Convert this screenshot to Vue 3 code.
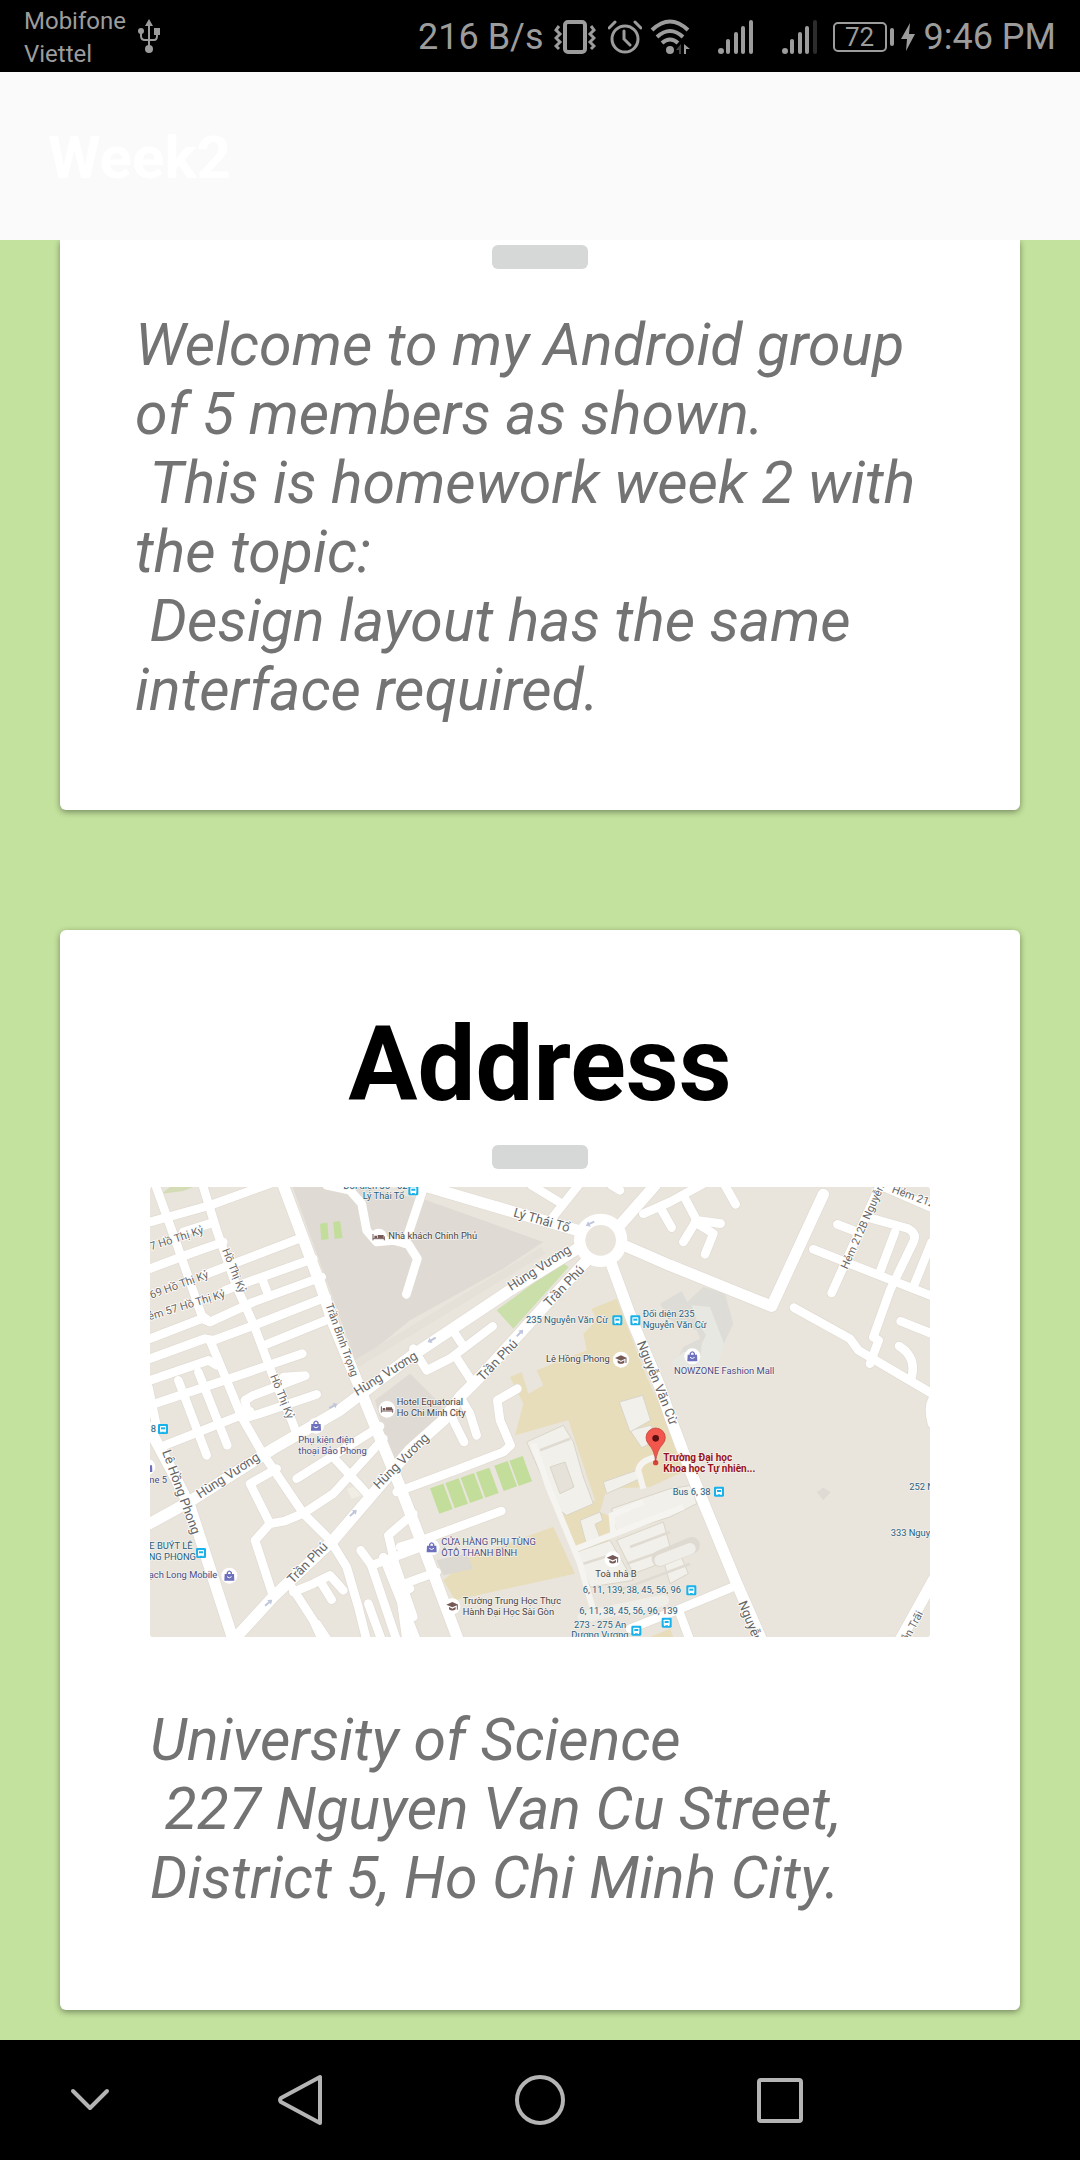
<script setup>
const intro =
  'Welcome to my Android group of 5 members as shown.\n This is homework week 2 with the topic:\n Design layout has the same interface required.'
const address =
  'University of Science\n 227 Nguyen Van Cu Street, District 5, Ho Chi Minh City.'

const lanes = [
  // Hồ Thị Kỷ blocks
  'M160 0L200 130L260 300L310 410L370 570L425 700L440 740',
  'M15 -10L80 170L155 385L180 405',
  'M0 105L180 55L360 -10',
  'M0 245L120 200L220 165',
  'M100 135L185 108',
  'M160 265L460 150',
  'M225 310L490 215',
  'M340 285L355 325',
  'M0 455L155 395L180 405L310 345L515 270',
  'M0 515L165 455L190 460L320 412L530 330',
  'M350 472L545 393',
  'M0 580L175 520L200 535',
  'M0 655L230 578L457 500',
  'M400 570L466 566M285 640L310 625L466 566',
  'M285 640L295 690L330 680L500 622',
  'M182 465L230 580L275 690L335 795L460 979L540 1059L590 1140L625 1260L650 1360',
  'M85 580L170 805', 'M145 555L232 775',
  'M45 775L260 690L300 672',
  'M-5 600L20 720',
  // south-west
  'M440 875L690 718', 'M460 979L550 920L700 755', 'M545 805L660 930',
  'M380 845L300 890L360 1010L405 1002L460 979',
  'M360 1010L315 1060L370 1229',
  'M430 1215L490 1190L540 1165L580 1210', 'M512 1185L545 1238',
  'M425 1200L490 1300L515 1355M500 1310L530 1355', 'M655 1250L695 1360',
  'M632 1090L665 1135L800 1085', 'M662 1129L740 1360',
  'M790 980L715 1045L735 1130L790 1290', 'M780 1205L750 1215L770 1360',
  'M750 1080L820 1058L1054 972', 'M750 1195L860 1155', 'M700 1110L800 1360',
  'M1102 605L1042 640L1050 700L1082 775L1060 795L930 845L740 915',
  'M880 680L905 690L942 765', 'M930 630L960 680L980 745',
  // centre
  'M790 485L830 550L900 515L1028 418', 'M905 425L935 470', 'M915 505L970 590',
  'M530 -5L600 10L635 50L650 130L680 165L730 160L775 172L802 215L769 322',
  'M825 -10L765 170',
  // north-east
  'M1205 95L1285 -5', 'M1145 -5L1235 50', 'M1385 -5L1410 10',
  'M1480 80L1560 45L1660 -10', 'M1530 60L1565 122',
  'M1600 25L1640 100L1712 110', 'M1640 100L1600 165', 'M1635 105L1690 140L1665 202',
  'M1725 -5L1757 52',
  'M1990 187L2340 325', 'M2062 112L2130 138', 'M2045 318L2190 -5L2340 60',
  'M2150 90L2275 125Q2302 140 2290 165L2220 310L2170 450L2186 460L2160 530',
  'M2235 135L2190 255', 'M2345 165L2290 300',
  'M1932 362L2100 455L2125 490L2350 622', 'M2252 403L2345 440',
  'M2247 477Q2300 510 2285 570', 'M2346 640Q2334 665 2346 710',
  'M1440 1325L1580 1270L1750 1199', 'M1590 1280L1620 1360',
]
const avenues = [
  'M400 -5L510 290L550 410L620 580L660 680L750 899L820 1080L925 1360',
  'M-5 720L70 860L120 959L250 1360',
  'M-5 1012L110 949L370 785L570 669L780 510L930 410L1080 310L1290 180',
  'M250 1360L370 1229L550 1059L670 919L780 789L880 700L930 630L990 570L1100 450L1190 350L1320 210',
  'M800 -10L1090 75L1300 135',
  'M1380 220L1450 410L1530 600L1560 689L1620 849L1760 1189L1835 1360',
  'M1410 170L1560 235L1865 358L2020 22',
  'M1405 120L1515 -5',
  'M2350 1180L2250 1360',
]
const streetNames = [
  [4, 190, -18, '7 Hồ Thị Kỷ', 1], [4, 335, -20, '69 Hồ Thị Kỷ', 1], [-2, 400, -17, 'ẻm 57 Hồ Thị Kỷ', 1],
  [216, 190, 68, 'Hồ Thị Kỷ', 1], [360, 568, 68, 'Hồ Thị Kỷ', 1], [526, 354, 70, 'Trần Bình Trọng', 1],
  [622, 628, -32, 'Hùng Vương'], [150, 935, -33, 'Hùng Vương'], [686, 908, -45, 'Hùng Vương'], [1084, 312, -33, 'Hùng Vương'],
  [428, 1192, -46, 'Trần Phú'], [998, 584, -46, 'Trần Phú'], [1198, 362, -46, 'Trần Phú'],
  [1088, 88, 16, 'Lý Thái Tổ'], [36, 794, 70, 'Lê Hồng Phong'],
  [1460, 468, 68, 'Nguyễn Văn Cừ'], [1764, 1248, 68, 'Nguyễn'],
  [2092, 248, -66, 'Hẻm 212B Nguyễn', 1], [2224, 16, 20, 'Hẻm 212', 1], [2274, 1366, -62, 'ễn Trãi', 1],
]
const places = [
  [580, 6, 'Đối diện 35 - 62', 'transit'], [638, 35, 'Lý Thái Tổ', 'transit'],
  [715, 156, 'Nhà khách Chính Phủ'], [1128, 408, '235 Nguyễn Văn Cừ', 'transit'],
  [1478, 390, 'Đối diện 235', 'transit'], [1478, 424, 'Nguyễn Văn Cừ', 'transit'],
  [1188, 525, 'Lê Hồng Phong'], [1572, 560, 'NOWZONE Fashion Mall', 'shop'],
  [740, 655, 'Hotel Equatorial'], [740, 688, 'Ho Chi Minh City'],
  [445, 768, 'Phụ kiện điện', 'shop'], [445, 801, 'thoại Bảo Phong', 'shop'],
  [2, 734, '8', 'transit'], [-2, 888, 'ne 5', 'shop'],
  [-2, 1087, 'E BUÝT LÊ', 'transit'], [-4, 1120, 'NG PHONG', 'transit'], [-4, 1174, 'ạch Long Mobile', 'shop'],
  [874, 1074, 'CỬA HÀNG PHỤ TÙNG', 'shop'], [874, 1107, 'ÔTÔ THANH BÌNH', 'shop'],
  [938, 1250, 'Trường Trung Học Thực'], [938, 1283, 'Hành Đại Học Sài Gòn'],
  [1336, 1169, 'Toà nhà B'], [1298, 1218, '6, 11, 139, 38, 45, 56, 96', 'transit'],
  [1288, 1280, '6, 11, 38, 45, 56, 96, 139', 'transit'],
  [1272, 1322, '273 - 275 An', 'transit'], [1264, 1354, 'Dương Vương', 'transit'],
  [1568, 923, 'Bus 6, 38', 'transit'], [2278, 909, '252 N', 'transit'], [2222, 1046, '333 Nguy', 'transit'],
]
const busStops = [[790, 10], [1402, 400], [1456, 400], [1707, 914], [39, 726], [153, 1098], [1624, 1210], [1459, 1331], [1550, 1307]]
const shops = [[1627, 508], [498, 716], [238, 1166], [845, 1081], [-8, 840]]
const schools = [[1413, 518], [1388, 1117], [907, 1258]]
const hotels = [[686, 150], [711, 667]]
const courts = [0, 46, 92, 138, 193, 238]
const arrows = [[550, 657, -28], [845, 459, 150], [1110, 438, -46], [610, 978, -42], [356, 1247, -40], [1320, 110, 155]]
</script>

<template>
  <div class="screen">
    <header class="status">
      <div class="carrier">
        <div class="operators"><span>Mobifone</span><span>Viettel</span></div>
        <svg width="24" height="36" viewBox="0 0 24 36" fill="none" stroke="#9c9c9c" stroke-width="2">
          <path d="M12 5V31M4 13V18Q4 22 8 22H17Q20 22 20 18V13" />
          <g fill="#9c9c9c" stroke="none"><path d="M12 1L16 8H8ZM17 10H23V17H17Z" /><circle cx="4" cy="13" r="3" /><circle cx="12" cy="31" r="4" /></g>
        </svg>
      </div>
      <div class="indicators">
        <span>216 B/s</span>
        <svg class="vibrate" width="42" height="34" viewBox="0 0 42 34" fill="none" stroke="#9c9c9c">
          <rect x="11" y="2" width="20" height="30" rx="3" stroke-width="4" />
          <path d="M5 6L2 10L6 14L2 18L6 22L2 26L5 29M37 6L40 10L36 14L40 18L36 22L40 26L37 29" stroke-width="3" />
        </svg>
        <svg class="alarm" width="34" height="36" viewBox="0 0 34 36" fill="none" stroke="#9c9c9c" stroke-width="3">
          <circle cx="17" cy="20" r="13" /><path d="M16 12V20L22 26M1 9L7 3M33 9L27 3" stroke-linecap="round" />
        </svg>
        <svg class="wifi" width="40" height="36" viewBox="0 0 40 36" fill="none" stroke="#9c9c9c" stroke-width="4">
          <path d="M2 11Q20 -6 38 11M7 18Q20 6 33 18M12 24Q20 17 28 24" /><circle cx="20" cy="31" r="4" fill="#9c9c9c" stroke="none" />
          <path d="M34 25L40 30H36V35H34Z" fill="#9c9c9c" stroke="none" /><path d="M31 25V35H29V31H26Z" fill="#444" stroke="none" />
        </svg>
        <svg class="signal" width="36" height="34" viewBox="0 0 36 34" fill="#9c9c9c">
          <circle cx="3" cy="31" r="3" /><rect x="8" y="19" width="4" height="15" rx="2" /><rect x="16" y="12" width="4" height="22" rx="2" /><rect x="23" y="6" width="4" height="28" rx="2" /><rect x="31" y="0" width="4" height="34" rx="2" />
        </svg>
        <svg class="signal" width="36" height="34" viewBox="0 0 36 34" fill="#9c9c9c">
          <circle cx="3" cy="31" r="3" /><rect x="8" y="19" width="4" height="15" rx="2" /><rect x="16" y="12" width="4" height="22" rx="2" /><rect x="23" y="6" width="4" height="28" rx="2" /><rect x="31" y="0" width="4" height="34" rx="2" fill="#2c2c2c" />
        </svg>
        <span class="battery">72</span>
        <svg class="bolt" width="14" height="28" viewBox="0 0 14 28"><path d="M9 0L0 16H6L5 28L14 11H8Z" fill="#9c9c9c" /></svg>
        <span>9:46 PM</span>
      </div>
    </header>

    <div class="appbar"><h1>Week2</h1></div>

    <main>
      <section class="card first">
        <button class="tab" type="button" aria-label="Introduction"></button>
        <p>{{ intro }}</p>
      </section>

      <section class="card second">
        <h2>Address</h2>
        <button class="tab" type="button" aria-label="Show address"></button>
        <svg class="map" viewBox="0 0 2340 1350" role="img" aria-label="Map">
          <defs>
            <g id="bus"><rect x="-15" y="-15" width="30" height="30" rx="4" fill="#18b1ea" /><rect x="-9" y="-9" width="18" height="17" rx="2" fill="#fff" /><path d="M-6 -5H6V1H-6Z" fill="#18b1ea" /><path d="M-8 7H-4V10H-8ZM4 7H8V10H4Z" fill="#fff" /></g>
            <g id="shop"><circle r="24" fill="#fff" /><path d="M-14 -5H14L15 15H-15Z" fill="#6c70bd" /><path d="M-6 -4V-9Q0 -18 6 -9V-4" fill="none" stroke="#6c70bd" stroke-width="4" /><path d="M-7 3Q0 10 7 3" fill="none" stroke="#fff" stroke-width="3" /></g>
            <g id="school"><circle r="24" fill="#fff" /><path d="M-18 -5L0 -13L18 -5L0 3Z" fill="#755a58" /><path d="M-10 2V9Q0 16 10 9V2L0 7Z" fill="#755a58" /><path d="M15 -4V10" stroke="#755a58" stroke-width="3" /></g>
            <g id="hotel"><circle r="25" fill="#fff" /><path d="M-17 -9V10M-17 5H17M17 10V-2" stroke="#755a58" stroke-width="3" fill="none" /><path d="M-13 -4H-5V3H-13ZM-3 -6H15V3H-3Z" fill="#755a58" /></g>
          </defs>
          <rect width="2340" height="1350" fill="#e9e5dc" />

          <path d="M428 0H640L830 40L1180 165L1060 245L780 400L620 530Z" fill="#dfdad4" />
          <path d="M675 640L780 560L860 640L900 700L735 860Z" fill="#dfdad4" />
          <path d="M620 530L1180 190" stroke="#e6e1d8" stroke-width="24" />
          <path d="M1325 365L1400 335L1490 570L1570 740L1610 850L1500 900L1370 905L1350 975L1410 1000L1370 1065L1280 1085L1235 980L1335 940L1255 700L1095 745L1120 650L1080 570L1115 555L1135 620L1180 595L1160 550L1310 490L1300 440L1340 400Z" fill="#e8ddba" />
          <path d="M960 1110L1210 1019L1275 1160L915 1240L880 1180Z" fill="#e8ddba" />
          <path d="M1500 1350L1560 1325L1570 1350Z" fill="#e8ddba" />
          <path d="M860 1120L950 1100L970 1145L880 1165Z" fill="#dcd8d2" />
          <path d="M60 0H130L100 12L35 20Z" fill="#d4dcb6" />
          <path d="M510 110L532 107L536 156L514 160ZM550 105L570 102L578 152L554 156Z" fill="#c3dd9b" />
          <path d="M1040 370L1235 226L1256 240L1090 425Z" fill="#cadfaa" />
          <path v-for="c in courts" :key="c" :d="`M${840 + c} ${904 - Math.round(c * 0.35)}l40 -14l28 76l-40 14z`" fill="#c3dd9b" />
          <path d="M1530 350L1595 312L1612 345L1660 300L1725 320L1750 410L1712 490L1690 540H1570L1600 480L1650 455L1640 430L1560 400Z" fill="#dddcd6" />
          <path d="M1625 355L1680 360L1722 470L1700 540H1650L1655 470L1668 445L1640 400Z" fill="#e8e8e2" />
          <path d="M1565 525L1600 495H1650L1660 545L1580 570Z" fill="#e8e8e2" />

          <g fill="#f2f0ea" stroke="#d9d5c8" stroke-width="3">
            <path d="M1130 765L1240 715L1270 765L1300 870L1330 950L1250 985L1215 960Z" />
            <path d="M1440 730L1500 715L1540 750L1475 782Z" />
            <path d="M1408 645L1478 625L1502 700L1440 735Z" />
            <path d="M1360 885L1460 850L1470 875L1370 920Z" />
            <path d="M1290 1000L1350 975L1358 1000L1335 1012L1355 1065L1310 1075Z" />
            <path d="M1385 965L1560 905L1625 895L1640 950L1560 990L1400 1040Z" />
            <path d="M1280 1095L1380 1060L1450 1180L1320 1200Z" />
            <path d="M1400 1060L1540 1005L1560 1080L1530 1130L1450 1160Z" />
            <path d="M1540 1120L1590 1100L1615 1160L1560 1190Z" />
          </g>
          <path d="M1200 840L1245 825L1272 900L1230 920Z" fill="#e6e1d9" stroke="#d9d5c8" stroke-width="3" />
          <path d="M1170 790L1260 755M1440 1080L1560 1035M1300 1130L1380 1105M1430 1130L1600 1070M1380 1220L1620 1130" stroke="#dfdbd2" stroke-width="8" fill="none" />
          <path d="M1150 770L1195 900L1290 1130L1330 1270M1280 1085L1600 960M1390 1040L1385 985L1480 945M1480 905L1465 850Q1470 820 1520 810" fill="none" stroke="#f5f4f0" stroke-width="18" />
          <path d="M1530 1115L1625 1075" stroke="#dedad2" stroke-width="50" stroke-linecap="round" />
          <path d="M1530 1120L1620 1085M1300 1290L1540 1240" stroke="#f0eee8" stroke-width="34" stroke-linecap="round" />
          <path d="M2000 915L2020 902L2042 915L2020 940Z" fill="#dfdbd4" />
          <path d="M590 905L625 895L635 925L605 935Z" fill="#f0ede4" />

          <g fill="none" stroke-linecap="round" stroke-linejoin="round">
            <path v-for="d in lanes" :key="d" :d="d" stroke="#e0dbd2" stroke-width="30" />
            <path v-for="d in avenues" :key="d" :d="d" stroke="#e0dbd2" stroke-width="38" />
            <g stroke="#fff">
              <path v-for="d in lanes" :key="d" :d="d" stroke-width="26" />
              <path v-for="d in avenues" :key="d" :d="d" stroke-width="34" />
              <circle cx="1352" cy="160" r="63" stroke-width="34" fill="#e9e5dc" />
            </g>
          </g>
          <path v-for="a in arrows" :key="a[0]" d="M-14 -3H2V-9L14 0L2 9V3H-14Z" fill="#bfc6dc" :transform="`translate(${a[0]} ${a[1]}) rotate(${a[2]})`" />

          <g class="names">
            <text v-for="(s, i) in streetNames" :key="i" :class="{ minor: s[4] }" :transform="`translate(${s[0]} ${s[1]}) rotate(${s[2]})`">{{ s[3] }}</text>
          </g>
          <use v-for="p in hotels" :key="p[0]" href="#hotel" :x="p[0]" :y="p[1]" />
          <use v-for="p in schools" :key="p[0]" href="#school" :x="p[0]" :y="p[1]" />
          <use v-for="p in shops" :key="p[0]" href="#shop" :x="p[0]" :y="p[1]" />
          <use v-for="p in busStops" :key="p[0]" href="#bus" :x="p[0]" :y="p[1]" />
          <g class="places">
            <text v-for="(p, i) in places" :key="i" :x="p[0]" :y="p[1]" :class="p[3]">{{ p[2] }}</text>
            <text class="target" x="1540" y="821">Trường Đại học</text>
            <text class="target" x="1540" y="856">Khoa học Tự nhiên...</text>
          </g>
          <circle cx="1517" cy="827" r="8" fill="#d8433c" />
          <path d="M1517 826Q1514 790 1496 772Q1488 762 1488 752A29 29 0 0 1 1546 752Q1546 762 1538 772Q1520 790 1517 826Z" fill="#f2564d" stroke="#b93a34" stroke-width="2" />
          <circle cx="1517" cy="754" r="10" fill="#5c0f10" />
        </svg>
        <p>{{ address }}</p>
      </section>
    </main>

    <nav>
      <button type="button" aria-label="Hide bar"><svg width="40" height="24" viewBox="0 0 40 24"><path d="M3 3L20 20L37 3" stroke-width="4" /></svg></button>
      <button type="button" aria-label="Back"><svg width="48" height="52" viewBox="0 0 48 52"><path d="M44 3V49L5 28Q3 26 5 24Z" stroke-width="4" /></svg></button>
      <button type="button" aria-label="Home"><svg width="52" height="52" viewBox="0 0 52 52"><circle cx="26" cy="26" r="23" stroke-width="4" /></svg></button>
      <button type="button" aria-label="Recent apps"><svg width="48" height="48" viewBox="0 0 48 48"><rect x="3" y="4" width="42" height="41" rx="2" stroke-width="4" /></svg></button>
    </nav>
  </div>
</template>

<style>
body {
  margin: 0;
  background: #c3e29d;
}
</style>

<style scoped>
.screen {
  display: flex;
  flex-direction: column;
  min-height: 100vh;
  background: #c3e29d;
  font-family: Roboto, "Noto Sans", sans-serif;
}
.status {
  display: flex;
  justify-content: space-between;
  align-items: center;
  height: 72px;
  padding: 0 24px;
  background: #000;
  color: #9c9c9c;
  font-size: 36px;
}
.carrier, .indicators {
  display: flex;
  align-items: center;
}
.carrier { gap: 11px; }
.indicators { padding-top: 2px; }
.operators {
  display: flex;
  flex-direction: column;
  padding-top: 4px;
  font-size: 24px;
  line-height: 33px;
}
.vibrate { margin-left: 10px; }
.alarm { margin-left: 12px; }
.wifi { margin-left: 8px; }
.signal { margin-left: 28px; }
.battery {
  position: relative;
  box-sizing: border-box;
  width: 54px;
  margin-left: 15px;
  border: 2px solid #9c9c9c;
  border-radius: 5px;
  font-size: 26px;
  line-height: 26px;
  text-align: center;
}
.battery::after {
  content: "";
  position: absolute;
  right: -9px;
  top: 4px;
  width: 4px;
  height: 18px;
  border-radius: 2px;
  background: #9c9c9c;
}
.bolt { margin: 0 9px 0 14px; }
.appbar {
  display: flex;
  align-items: center;
  box-sizing: border-box;
  height: 168px;
  padding: 4px 48px 0;
  background: #fafafa;
}
h1 {
  margin: 0;
  color: #fff;
  font-size: 60px;
  line-height: 70px;
}
main {
  flex: 1;
  display: flex;
  flex-direction: column;
  gap: 120px;
  padding: 0 60px 30px;
}
.card {
  display: flex;
  flex-direction: column;
  border-radius: 6px;
  background: #fff;
  box-shadow: 0 2px 6px rgba(0, 0, 0, 0.4);
}
.first {
  padding: 5px 75px 86px;
  border-radius: 0 0 6px 6px;
  clip-path: inset(0 -12px -12px);
}
.second { padding: 74px 90px 98px; }
.tab {
  align-self: center;
  width: 96px;
  height: 24px;
  padding: 0;
  border: 0;
  border-radius: 6px;
  background: #d6d7d7;
}
p {
  margin: 0;
  color: #737373;
  font-size: 59px;
  font-style: italic;
  line-height: 69px;
  white-space: pre-wrap;
}
.first p { margin-top: 41px; }
.second p { margin-top: 68px; }
h2 {
  margin: 0 0 20px;
  color: #000;
  font-size: 103px;
  line-height: 121px;
  text-align: center;
}
.map {
  display: block;
  width: 100%;
  height: auto;
  margin-top: 18px;
  border-radius: 3px;
}
.names {
  fill: #666;
  stroke: #fff;
  stroke-width: 5px;
  paint-order: stroke;
  font-size: 39px;
}
.minor { font-size: 33px; }
.places {
  fill: #4a4442;
  stroke: #f4f2ed;
  stroke-width: 4px;
  paint-order: stroke;
  font-size: 28px;
}
.transit { fill: #27607f; }
.shop { fill: #4b4c87; }
.target {
  fill: #97131c;
  font-size: 30px;
  font-weight: 700;
}
nav {
  display: grid;
  grid-template-columns: 3fr 4fr 4fr 4fr 3fr;
  height: 120px;
  background: #000;
}
nav button {
  display: flex;
  align-items: center;
  justify-content: center;
  padding: 0;
  border: 0;
  background: none;
}
nav svg {
  fill: none;
  stroke: #b4b4b4;
  stroke-linecap: round;
  stroke-linejoin: round;
}
</style>
